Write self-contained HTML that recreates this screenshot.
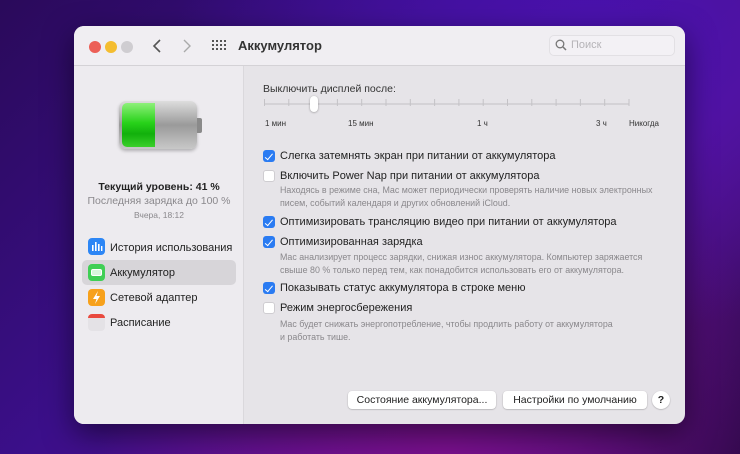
<!DOCTYPE html>
<html><head><meta charset="utf-8"><style>
*{margin:0;padding:0;box-sizing:border-box}
body{width:740px;height:454px;overflow:hidden;font-family:"Liberation Sans",sans-serif;position:relative;
background:radial-gradient(ellipse at 80% 10%,#4a12b0 0%,transparent 50%),radial-gradient(ellipse at 60% 100%,#7a108e 0%,transparent 55%),linear-gradient(135deg,#2a0a5a 0%,#3b0f8a 40%,#5a128f 70%,#2a0845 100%);}
.win{position:absolute;left:74px;top:26px;width:611px;height:398px;border-radius:10px;overflow:hidden;background:#e6e4e8;box-shadow:0 10px 30px rgba(0,0,0,.5)}
.tb{position:absolute;left:0;top:0;width:100%;height:40px;background:#f0eef2;border-bottom:1px solid #d4d2d6}
.side{position:absolute;left:0;top:40px;width:170px;height:358px;background:#edebef;border-right:1px solid #dad8dc}
.a{position:absolute;white-space:nowrap}
.dot{position:absolute;top:15px;width:12px;height:12px;border-radius:50%}
.cb{position:absolute;left:189px;width:12px;height:12px;border-radius:3px}
.on{background:#2a7bf2}
.on::after{content:"";position:absolute;left:4px;top:1.5px;width:3px;height:6.5px;border:solid #fff;border-width:0 1.6px 1.6px 0;transform:rotate(40deg)}
.off{background:#fff;border:1px solid #cfcdd1}
.lbl{position:absolute;left:206px;font-size:11px;color:#222}
.desc{position:absolute;left:206px;font-size:8.9px;color:#8a888c;line-height:12.5px}
.ic{position:absolute;left:14px;width:17px;height:17px;border-radius:4px}
.si{position:absolute;left:36px;font-size:11px;color:#222}
.btn{position:absolute;top:365px;height:18px;background:#fff;border-radius:4px;box-shadow:0 0.5px 1.5px rgba(0,0,0,.3);font-size:10.5px;color:#222;text-align:center;line-height:18px}
</style></head><body>
<div class="win">
<div class="tb">
<div class="dot" style="left:15px;background:#ec5f57"></div>
<div class="dot" style="left:31px;background:#f4bd30"></div>
<div class="dot" style="left:47px;background:#cfcdd1"></div>
<svg class="a" style="left:78px;top:12px" width="10" height="16"><path d="M8 2 L2 8 L8 14" stroke="#555" stroke-width="1.6" fill="none"/></svg>
<svg class="a" style="left:108px;top:12px" width="10" height="16"><path d="M2 2 L8 8 L2 14" stroke="#aaa" stroke-width="1.4" fill="none"/></svg>
<svg class="a" style="left:138px;top:14px" width="14" height="12" fill="#555">
<g><rect x="0" y="0" width="2" height="2"/><rect x="4" y="0" width="2" height="2"/><rect x="8" y="0" width="2" height="2"/><rect x="12" y="0" width="2" height="2"/>
<rect x="0" y="4" width="2" height="2"/><rect x="4" y="4" width="2" height="2"/><rect x="8" y="4" width="2" height="2"/><rect x="12" y="4" width="2" height="2"/>
<rect x="0" y="8" width="2" height="2"/><rect x="4" y="8" width="2" height="2"/><rect x="8" y="8" width="2" height="2"/><rect x="12" y="8" width="2" height="2"/></g></svg>
<div class="a" style="left:164px;top:12px;font-size:13px;font-weight:bold;color:#333">Аккумулятор</div>
<div class="a" style="left:475px;top:9px;width:126px;height:21px;border:1px solid #e2e0e4;border-radius:5px;background:#f3f1f5"></div>
<svg class="a" style="left:481px;top:13px" width="12" height="12"><circle cx="5" cy="5" r="3.8" stroke="#777" stroke-width="1.3" fill="none"/><path d="M8 8 L11 11" stroke="#777" stroke-width="1.5"/></svg>
<div class="a" style="left:497px;top:13px;font-size:11px;color:#b5b3b7">Поиск</div>
</div>
<div class="side">
<div class="a" style="left:45px;top:35px;width:78px;height:48px;border-radius:7px;background:linear-gradient(180deg,#ddd,#9a9a9a 50%,#c8c8c8);box-shadow:0 2px 3px rgba(0,0,0,.25)"></div>
<div class="a" style="left:48px;top:37px;width:33px;height:44px;border-radius:5px 0 0 5px;background:linear-gradient(180deg,#8ef07a,#28d21a 45%,#12b00c 70%,#3ad02a)"></div>
<div class="a" style="left:123px;top:52px;width:5px;height:15px;border-radius:0 2px 2px 0;background:#8a8a8a"></div>
<div class="a" style="left:0;width:170px;text-align:center;top:115px;font-size:10.5px;font-weight:bold;color:#222">Текущий уровень: 41 %</div>
<div class="a" style="left:0;width:170px;text-align:center;top:129px;font-size:10.5px;color:#8a888c">Последняя зарядка до 100 %</div>
<div class="a" style="left:0;width:170px;text-align:center;top:144px;font-size:8.5px;color:#8a888c">Вчера, 18:12</div>
<div class="a" style="left:8px;top:194px;width:154px;height:25px;border-radius:5px;background:#d7d5d9"></div>
<div class="ic" style="top:172px;background:#2d86f5"><svg width="17" height="17"><g fill="#fff"><rect x="4" y="7" width="1.6" height="6"/><rect x="7" y="4" width="1.6" height="9"/><rect x="10" y="6" width="1.6" height="7"/><rect x="13" y="8" width="1.4" height="5"/></g></svg></div>
<div class="ic" style="top:198px;background:#3fcf55"><div class="a" style="left:3px;top:5px;width:11px;height:7px;border:1.2px solid #fff;border-radius:2px;background:rgba(255,255,255,.8)"></div></div>
<div class="ic" style="top:223px;background:#f7a11c"><svg width="17" height="17"><path d="M10 2 L5 10 L8.5 10 L7 15 L12 7 L8.5 7 Z" fill="#fff"/></svg></div>
<div class="ic" style="top:248px;background:#e4e2e6;border-top:4px solid #e94a3f"></div>
<div class="si" style="top:176px">История использования</div>
<div class="si" style="top:201px">Аккумулятор</div>
<div class="si" style="top:226px">Сетевой адаптер</div>
<div class="si" style="top:251px">Расписание</div>
</div>
<div class="a" style="left:189px;top:57px;font-size:10.5px;color:#333">Выключить дисплей после:</div>
<div class="a" style="left:190px;top:77px;width:365px;height:2px;background:#d4d2d6"></div>
<svg class="a" style="left:189px;top:73px" width="368" height="10" id="ticks"></svg>
<div class="a" style="left:236px;top:70px;width:8px;height:16px;border-radius:4px;background:#fff;box-shadow:0 0.5px 2px rgba(0,0,0,.35)"></div>
<div class="a" style="left:191px;top:93px;font-size:8px;color:#333">1 мин</div>
<div class="a" style="left:274px;top:93px;font-size:8px;color:#333">15 мин</div>
<div class="a" style="left:403px;top:93px;font-size:8px;color:#333">1 ч</div>
<div class="a" style="left:522px;top:93px;font-size:8px;color:#333">3 ч</div>
<div class="a" style="left:555px;top:93px;font-size:8px;color:#333">Никогда</div>
<div class="cb on" style="top:124px"></div><div class="lbl" style="top:124px">Слегка затемнять экран при питании от аккумулятора</div>
<div class="cb off" style="top:144px"></div><div class="lbl" style="top:144px">Включить Power Nap при питании от аккумулятора</div>
<div class="desc" style="top:158px">Находясь в режиме сна, Mac может периодически проверять наличие новых электронных<br>писем, событий календаря и других обновлений iCloud.</div>
<div class="cb on" style="top:190px"></div><div class="lbl" style="top:190px">Оптимизировать трансляцию видео при питании от аккумулятора</div>
<div class="cb on" style="top:210px"></div><div class="lbl" style="top:210px">Оптимизированная зарядка</div>
<div class="desc" style="top:225px">Mac анализирует процесс зарядки, снижая износ аккумулятора. Компьютер заряжается<br>свыше 80 % только перед тем, как понадобится использовать его от аккумулятора.</div>
<div class="cb on" style="top:256px"></div><div class="lbl" style="top:256px">Показывать статус аккумулятора в строке меню</div>
<div class="cb off" style="top:276px"></div><div class="lbl" style="top:276px">Режим энергосбережения</div>
<div class="desc" style="top:292px">Mac будет снижать энергопотребление, чтобы продлить работу от аккумулятора<br>и работать тише.</div>
<div class="btn" style="left:274px;width:148px">Состояние аккумулятора...</div>
<div class="btn" style="left:429px;width:144px">Настройки по умолчанию</div>
<div class="btn" style="left:578px;width:18px;border-radius:50%;font-weight:bold">?</div>
</div>
<script>
var s=document.getElementById('ticks'),h='';
for(var i=0;i<16;i++){var x=1+i*24.3;h+='<rect x="'+x.toFixed(1)+'" y="0" width="1" height="7" fill="#c4c2c6"/>';}
s.innerHTML=h;
</script>
</body></html>
